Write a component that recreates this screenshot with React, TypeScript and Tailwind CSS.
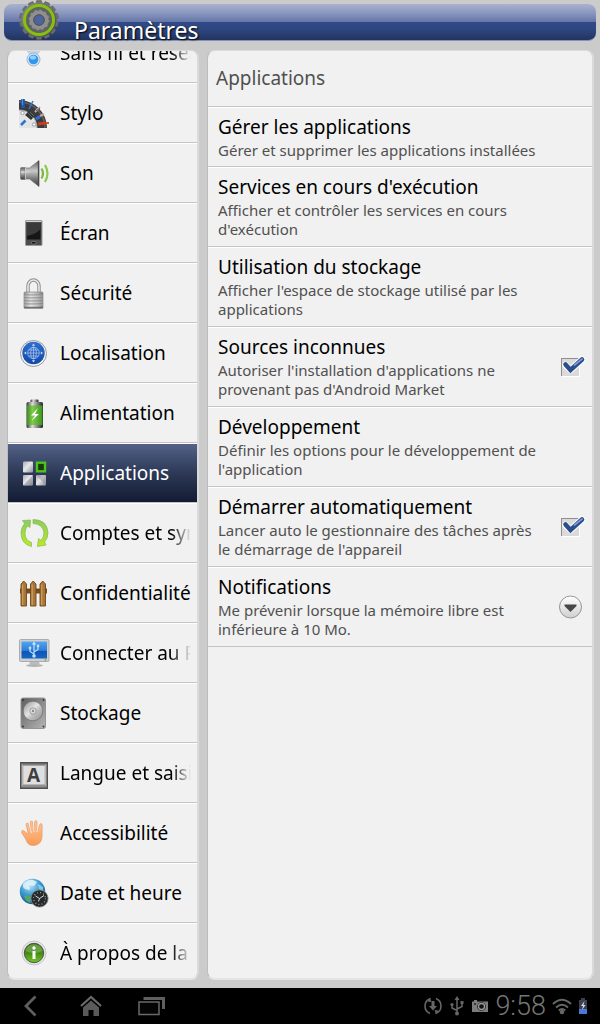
import React, { useState } from "react"

interface ICategory {
  id: string
  label: string
  icon: React.FC
  fade?: boolean
}

interface ISetting {
  id: string
  title: string
  summary: string
  compact?: boolean
  kind: "link" | "check" | "list"
}

const iconClass = "h-8 w-8 shrink-0"

const WirelessIcon: React.FC = () => (
  <svg viewBox="0 0 32 32" className={iconClass} aria-hidden="true">
    <path d="M6 8a14 14 0 0 1 20 0M9 13a9 9 0 0 1 14 0" fill="none" stroke="#a9c6e6" strokeWidth="2" />
    <path d="M7 12q8-4 17 0l-4 5h-9z" fill="#c3d4e6" />
    <circle cx="15.500" cy="22.500" r="6.500" fill="#d5e2ef" stroke="#9fb8d2" strokeWidth="1" />
    <circle cx="15.500" cy="22.500" r="4.800" fill="#2e97f2" />
    <ellipse cx="15" cy="20.500" rx="3" ry="2" fill="#8fd0ff" />
  </svg>
)

const PenIcon: React.FC = () => (
  <svg viewBox="0 0 32 32" className={iconClass} aria-hidden="true">
    <path d="M1 3A28 28 0 0 1 29 31H18A17 17 0 0 0 1 14z" fill="#3b3b3d" />
    <path d="M1 5A26 26 0 0 1 27 31" fill="none" stroke="#5f6062" strokeWidth="1.500" />
    <path d="M1 13A18 18 0 0 1 19 31H1z" fill="#e3e4e5" />
    <path d="M1 13A18 18 0 0 1 19 31" fill="none" stroke="#a5a7aa" strokeWidth="1" />
    <path d="M7 18l4-4 6 5-4 4z" fill="#303236" />
    <path d="M10 16l5 5M12 15l4 4" stroke="#777" strokeWidth="0.800" />
    <path d="M5 11V2" stroke="#1959b8" strokeWidth="3.500" />
    <path d="M4.500 8V2" stroke="#4d93e4" strokeWidth="1" />
    <path d="M11 12l4-8" stroke="#3b78c6" strokeWidth="1.600" />
    <path d="M17 15l5-5" stroke="#b9babd" strokeWidth="2" />
    <path d="M18 14l4-3" stroke="#69503e" strokeWidth="1" />
    <path d="M18 22l4-2.500" stroke="#2b72d6" strokeWidth="3" />
    <path d="M22 19l4-2" stroke="#c9a394" strokeWidth="2" />
    <path d="M20 27l8-1" stroke="#c93a1e" strokeWidth="3" />
    <path d="M28 26h3" stroke="#e0543a" strokeWidth="2" />
    <path d="M3 28l4.500-4.500" stroke="#2f73d0" strokeWidth="2.500" />
    <circle cx="4.500" cy="16" r="1.700" fill="#fff" stroke="#888" strokeWidth="0.800" />
    <circle cx="16" cy="27.500" r="1.700" fill="#fff" stroke="#888" strokeWidth="0.800" />
  </svg>
)

const SoundIcon: React.FC = () => (
  <svg viewBox="0 0 32 32" className={iconClass} aria-hidden="true">
    <defs>
      <linearGradient id="sound" x1="0" y1="0" x2="0" y2="1">
        <stop offset="0" stopColor="#5b5b5b" />
        <stop offset="0.400" stopColor="#c9c9c9" />
        <stop offset="0.700" stopColor="#7a7a7a" />
        <stop offset="1" stopColor="#3d3d3d" />
      </linearGradient>
    </defs>
    <rect x="2.500" y="10.500" width="5" height="12" rx="1" fill="url(#sound)" stroke="#777" strokeWidth="0.700" />
    <path d="M7 11h4.500L21 3.500v26L11.500 22H7z" fill="url(#sound)" stroke="#777" strokeWidth="0.700" />
    <path d="M2.500 15h9M7.500 11v11" stroke="#eee" strokeWidth="0.800" opacity="0.700" />
    <path d="M20.500 4v25" stroke="#4a4a4a" strokeWidth="1.200" />
    <path d="M23.500 11.500q3 5 0 10" fill="none" stroke="#7cb93e" strokeWidth="2.200" />
    <path d="M27 8q5 8.500 0 17" fill="none" stroke="#8cc751" strokeWidth="2.200" />
  </svg>
)

const ScreenIcon: React.FC = () => (
  <svg viewBox="0 0 32 32" className={iconClass} aria-hidden="true">
    <rect x="7.500" y="3.500" width="16.500" height="25" rx="0.800" fill="#4c4c4c" stroke="#9b9b9b" strokeWidth="1" />
    <rect x="9" y="6" width="13.500" height="16.500" fill="#151515" />
    <path d="M9 6h13.500v6Q19 17 9 19z" fill="#3a3a3a" />
    <path d="M8 4.500h15.500" stroke="#cfcfcf" strokeWidth="1" />
    <rect x="13.500" y="24.500" width="4.500" height="2.500" rx="1" fill="#161616" stroke="#8a8a8a" strokeWidth="0.700" />
  </svg>
)

const LockIcon: React.FC = () => (
  <svg viewBox="0 0 32 32" className={iconClass} aria-hidden="true">
    <defs>
      <linearGradient id="lock" x1="0" y1="0" x2="1" y2="0">
        <stop offset="0" stopColor="#8e8e8e" />
        <stop offset="0.350" stopColor="#dcdcdc" />
        <stop offset="0.700" stopColor="#b5b5b5" />
        <stop offset="1" stopColor="#7d7d7d" />
      </linearGradient>
    </defs>
    <path d="M10 16V9a5.500 6 0 0 1 11 0v7" fill="none" stroke="#8d8d8d" strokeWidth="3.400" />
    <path d="M10 16V9a5.500 6 0 0 1 11 0v7" fill="none" stroke="#e6e6e6" strokeWidth="1.600" />
    <rect x="6" y="15" width="19" height="16.500" rx="1" fill="url(#lock)" stroke="#8a8a8a" strokeWidth="0.700" />
    <path d="M6 18h19M6 21h19M6 24h19M6 27h19" stroke="#878787" strokeWidth="0.900" />
    <path d="M6 19h19M6 22h19M6 25h19M6 28h19" stroke="#ededed" strokeWidth="0.400" />
    <path d="M6 30.500h19" stroke="#6e6e6e" strokeWidth="1.200" />
  </svg>
)

const LocationIcon: React.FC = () => (
  <svg viewBox="0 0 32 32" className={iconClass} aria-hidden="true">
    <defs>
      <linearGradient id="location" x1="0" y1="0" x2="0" y2="1">
        <stop offset="0" stopColor="#2f6fd0" />
        <stop offset="1" stopColor="#1149a8" />
      </linearGradient>
    </defs>
    <circle cx="15.500" cy="16.500" r="13" fill="#f4f4f4" stroke="#8d8f94" strokeWidth="0.900" />
    <circle cx="15.500" cy="16" r="11.200" fill="url(#location)" />
    <g fill="none" stroke="#b5cff5" strokeWidth="0.700">
      <circle cx="15.500" cy="16" r="5.800" />
      <ellipse cx="15.500" cy="16" rx="2.800" ry="5.800" />
      <path d="M9.700 16h11.600M10.700 13h9.600M10.700 19h9.600M15.500 10v12" />
    </g>
    <path d="M15.500 6.500l1.600 2.200h-3.200zM15.500 25.500l1.600-2.200h-3.200zM6 16l2.200-1.600v3.200zM25 16l-2.200-1.600v3.200z" fill="#cfe0fa" />
  </svg>
)

const BatteryIcon: React.FC = () => (
  <svg viewBox="0 0 32 32" className={iconClass} aria-hidden="true">
    <defs>
      <linearGradient id="battery" x1="0" y1="0" x2="1" y2="0">
        <stop offset="0" stopColor="#3f8f22" />
        <stop offset="0.350" stopColor="#7fcb4a" />
        <stop offset="1" stopColor="#3d951f" />
      </linearGradient>
      <linearGradient id="batteryCap" x1="0" y1="0" x2="1" y2="0">
        <stop offset="0" stopColor="#333" />
        <stop offset="0.350" stopColor="#ddd" />
        <stop offset="1" stopColor="#222" />
      </linearGradient>
    </defs>
    <rect x="12.500" y="2.500" width="8" height="4" rx="1" fill="url(#batteryCap)" />
    <rect x="8.500" y="5" width="16.500" height="26" rx="1.500" fill="url(#batteryCap)" />
    <rect x="9" y="8.500" width="15.500" height="19.500" fill="url(#battery)" />
    <path d="M20 11l-7 7.500h4L13.500 24l7.500-7h-4z" fill="#fff" />
  </svg>
)

const AppsIcon: React.FC = () => (
  <svg viewBox="0 0 32 32" className={iconClass} aria-hidden="true">
    <defs>
      <linearGradient id="apps" x1="0" y1="0" x2="1" y2="1">
        <stop offset="0" stopColor="#a9acb2" />
        <stop offset="0.450" stopColor="#e6e7ea" />
        <stop offset="1" stopColor="#8e9198" />
      </linearGradient>
    </defs>
    <rect x="5" y="4.500" width="10" height="11" rx="1" fill="url(#apps)" />
    <rect x="5" y="18" width="10" height="10.500" rx="1" fill="url(#apps)" />
    <rect x="18" y="18" width="10" height="10.500" rx="1" fill="url(#apps)" />
    <path d="M5 28.500L15 18v10.500zM18 18l10 10.500V18z" fill="#6f737c" opacity="0.350" />
    <rect x="19" y="5.700" width="8" height="8.600" fill="#173a0c" stroke="#4cc41c" strokeWidth="2.400" />
  </svg>
)

const SyncIcon: React.FC = () => (
  <svg viewBox="0 0 32 32" className={iconClass} aria-hidden="true">
    <defs>
      <linearGradient id="sync" x1="0" y1="0" x2="0" y2="1">
        <stop offset="0" stopColor="#8ccb62" />
        <stop offset="1" stopColor="#b9ec1c" />
      </linearGradient>
    </defs>
    <path
      d="M13.500 29.500Q3 27 3 16q0-5 3.500-9.500L4.500 3.500 12.500 3 12 10.500 9.500 9Q7 12 7 16q0 7.500 6.500 9.500z"
      fill="url(#sync)"
      stroke="#87b85c"
      strokeWidth="0.700"
    />
    <path
      d="M15 2.500q14 0 15 13 0 6-3.500 9.500l1.500 3-8.500 1.500 1-8 2.500 2Q26 20 26 16 25 7 15 6.500z"
      fill="url(#sync)"
      stroke="#87b85c"
      strokeWidth="0.700"
    />
  </svg>
)

const FenceIcon: React.FC = () => (
  <svg viewBox="0 0 32 32" className={iconClass} aria-hidden="true">
    <path d="M2 12h27v4.500H2z" fill="#7c4e1d" />
    <path d="M2 12h27" stroke="#5d3812" strokeWidth="0.800" />
    {[3, 12.500, 22].map((x) => (
      <g key={x}>
        <path d={`M${x} 29V7l2.700-3 2.800 3v22z`} fill="#a8763a" stroke="#6d4517" strokeWidth="0.900" />
        <path d={`M${x + 1.700} 28V7.500`} stroke="#cf9f58" strokeWidth="1.200" />
      </g>
    ))}
  </svg>
)

const MonitorIcon: React.FC = () => (
  <svg viewBox="0 0 32 32" className={iconClass} aria-hidden="true">
    <defs>
      <linearGradient id="monitor" x1="0" y1="0" x2="0" y2="1">
        <stop offset="0" stopColor="#53a5ec" />
        <stop offset="0.550" stopColor="#2a7bd6" />
        <stop offset="0.560" stopColor="#0b55b6" />
        <stop offset="1" stopColor="#1766c4" />
      </linearGradient>
    </defs>
    <rect x="1.500" y="2.500" width="29.500" height="22" rx="1.200" fill="#cdcfd1" stroke="#9c9fa2" strokeWidth="0.800" />
    <rect x="3.500" y="4.500" width="25.500" height="17" fill="url(#monitor)" />
    <path d="M12 25h9l1 2.500h-11z" fill="#b9bbbd" />
    <ellipse cx="16.500" cy="28.500" rx="8.500" ry="1.500" fill="#b1b3b5" />
    <path d="M16 20V6.500M16 17l-4-2.500v-3M16 15l4-2.500v-3" fill="none" stroke="#c0def9" strokeWidth="1.200" />
    <path d="M16 4.500l2 3h-4z" fill="#d7ecff" />
    <circle cx="12" cy="11" r="1.400" fill="#c0def9" />
    <circle cx="20" cy="9" r="1.400" fill="#c0def9" />
    <circle cx="16" cy="19" r="1.800" fill="#c0def9" />
    <circle cx="27.500" cy="23" r="0.900" fill="#7bbf2a" />
  </svg>
)

const DiskIcon: React.FC = () => (
  <svg viewBox="0 0 32 32" className={iconClass} aria-hidden="true">
    <defs>
      <linearGradient id="disk" x1="0" y1="0" x2="1" y2="1">
        <stop offset="0" stopColor="#5d5d5d" />
        <stop offset="1" stopColor="#b6b6b6" />
      </linearGradient>
      <linearGradient id="platter" x1="0" y1="0" x2="1" y2="1">
        <stop offset="0" stopColor="#8f8f8f" />
        <stop offset="0.450" stopColor="#e4e4e4" />
        <stop offset="0.600" stopColor="#c0c0c0" />
        <stop offset="1" stopColor="#8c8c8c" />
      </linearGradient>
    </defs>
    <rect x="3" y="1" width="24.500" height="30.500" rx="2" fill="url(#disk)" stroke="#8f8f8f" strokeWidth="0.900" />
    <circle cx="15" cy="14" r="9.800" fill="url(#platter)" stroke="#707070" strokeWidth="0.700" />
    <circle cx="15" cy="14" r="3.200" fill="#dedede" stroke="#8a8a8a" strokeWidth="0.800" />
    <circle cx="15" cy="14" r="1.200" fill="#8a8a8a" />
    {[5, 25.500].map((x) => (
      <React.Fragment key={x}>
        <circle cx={x} cy="3" r="0.900" fill="#333" />
        <circle cx={x} cy="29.500" r="0.900" fill="#333" />
      </React.Fragment>
    ))}
  </svg>
)

const LanguageIcon: React.FC = () => (
  <svg viewBox="0 0 32 32" className={iconClass} aria-hidden="true">
    <rect x="2" y="5" width="28" height="27" fill="#505050" />
    <path d="M3.500 6.500h25l-2 2h-21z" fill="#7e7e7e" />
    <path d="M3.500 30.500h25l-3-4h-19z" fill="#8e8e8e" />
    <path d="M3.500 6.500l3 3v17l-3 4zM28.500 6.500l-3 3v17l3 4z" fill="#b5b5b5" />
    <rect x="5.500" y="8.500" width="21" height="19" fill="#dfdfdf" />
    <text
      x="15.500"
      y="25"
      textAnchor="middle"
      fontFamily="Open Sans, Noto Sans, sans-serif"
      fontWeight="700"
      fontSize="19"
      fill="#3f3f3f"
    >
      A
    </text>
  </svg>
)

const HandIcon: React.FC = () => (
  <svg viewBox="0 0 32 32" className={iconClass} aria-hidden="true">
    <defs>
      <linearGradient id="hand" x1="0" y1="0" x2="0" y2="1">
        <stop offset="0" stopColor="#ffc79a" />
        <stop offset="1" stopColor="#fb9a55" />
      </linearGradient>
    </defs>
    <path
      d="M9.500 26Q8 22 3.500 15.500q0-2.500 2-2l5 4L8 7.500q.2-1.800 2-1.200L13 14l-.7-9.200q.8-1.600 2.200-.2L16 13.500l.8-9.300q1-1.400 2.100 0L19.500 14l2.600-7q1.200-1 2 .5L24 20q-.8 8-8.500 8.500-4.500 0-6-2.500z"
      fill="url(#hand)"
      stroke="#e09a68"
      strokeWidth="0.700"
    />
    <path d="M11.200 7l2.300 9M15.400 5l.6 10M20.500 6l-1.500 9" fill="none" stroke="#f7eee6" strokeWidth="0.900" />
  </svg>
)

const DateIcon: React.FC = () => (
  <svg viewBox="0 0 32 32" className={iconClass} aria-hidden="true">
    <defs>
      <radialGradient id="globe" cx="0.400" cy="0.250" r="0.850">
        <stop offset="0" stopColor="#bfe6f8" />
        <stop offset="0.450" stopColor="#3c9dd3" />
        <stop offset="1" stopColor="#0b4a85" />
      </radialGradient>
    </defs>
    <circle cx="14.500" cy="14.500" r="12.700" fill="url(#globe)" />
    <path d="M5 7q4-5 10-4l4 2-3 4-5-1 1 5-5-1-2-2z" fill="#e4f4fa" opacity="0.850" />
    <path d="M6 19q4-2 7 1 1 3-1 6-5-2-6-7z" fill="#53a56c" />
    <path d="M20 7l5 3v4l-4-2z" fill="#9bd4ea" opacity="0.800" />
    <circle cx="21.500" cy="21.500" r="8.600" fill="#272a2b" stroke="#86898a" strokeWidth="0.800" />
    <circle cx="21.500" cy="21.500" r="6" fill="none" stroke="#c3c3c3" strokeWidth="1.200" strokeDasharray="0.800 2.340" />
    <path d="M17.500 19l4 2.500 4.500-3M21.500 21.500l-1 3" fill="none" stroke="#d9d9d9" strokeWidth="1" />
  </svg>
)

const InfoIcon: React.FC = () => (
  <svg viewBox="0 0 32 32" className={iconClass} aria-hidden="true">
    <defs>
      <linearGradient id="info" x1="0" y1="0" x2="0" y2="1">
        <stop offset="0" stopColor="#3f7d12" />
        <stop offset="0.500" stopColor="#438b10" />
        <stop offset="1" stopColor="#74c62a" />
      </linearGradient>
    </defs>
    <circle cx="16" cy="16" r="12" fill="#e6e6e6" stroke="#bdbdbd" strokeWidth="0.800" />
    <circle cx="16" cy="16" r="9.700" fill="url(#info)" stroke="#4c5547" strokeWidth="1" />
    <path d="M7.500 14a8.700 8.700 0 0 1 17 0q-8 4-17 0z" fill="#fff" opacity="0.220" />
    <circle cx="16" cy="11" r="1.700" fill="#fff" />
    <rect x="14.500" y="14" width="3" height="8" fill="#fff" />
  </svg>
)

const teeth = Array.from({ length: 14 }, (_, index) => (index * 360) / 14)

const GearIcon: React.FC = () => (
  <svg viewBox="0 0 42 42" className="-mb-px h-[42px] w-[42px] shrink-0" aria-hidden="true">
    <defs>
      <linearGradient id="gear" x1="0" y1="0" x2="1" y2="1">
        <stop offset="0" stopColor="#8c8c8a" />
        <stop offset="1" stopColor="#4a4a49" />
      </linearGradient>
    </defs>
    {teeth.map((angle) => (
      <path
        key={angle}
        d="M17.500 6l1.200-4.500h4.600L24.500 6z"
        fill="#6f6f6d"
        stroke="#5b5b59"
        strokeWidth="0.500"
        transform={`rotate(${angle} 21 21)`}
      />
    ))}
    <circle cx="21" cy="21" r="17.500" fill="url(#gear)" />
    <circle cx="21" cy="21" r="14.500" fill="#5e6260" stroke="#84c20f" strokeWidth="3" />
    <circle cx="21" cy="21" r="7.600" fill="none" stroke="#8f8f8f" strokeWidth="4" />
    <circle cx="21" cy="21" r="9.800" fill="none" stroke="#8f8f8f" strokeWidth="1.200" strokeDasharray="2.560 2.570" />
    <circle cx="21" cy="21" r="5.300" fill="#4c639b" stroke="#4d4d4d" strokeWidth="0.900" />
  </svg>
)

const categories: ICategory[] = [
  { id: "wireless", label: "Sans fil et réseau", icon: WirelessIcon, fade: true },
  { id: "pen", label: "Stylo", icon: PenIcon },
  { id: "sound", label: "Son", icon: SoundIcon },
  { id: "screen", label: "Écran", icon: ScreenIcon },
  { id: "security", label: "Sécurité", icon: LockIcon },
  { id: "location", label: "Localisation", icon: LocationIcon },
  { id: "power", label: "Alimentation", icon: BatteryIcon },
  { id: "apps", label: "Applications", icon: AppsIcon },
  { id: "accounts", label: "Comptes et synchro", icon: SyncIcon, fade: true },
  { id: "privacy", label: "Confidentialité", icon: FenceIcon },
  { id: "connect", label: "Connecter au PC", icon: MonitorIcon, fade: true },
  { id: "storage", label: "Stockage", icon: DiskIcon },
  { id: "language", label: "Langue et saisie", icon: LanguageIcon, fade: true },
  { id: "accessibility", label: "Accessibilité", icon: HandIcon },
  { id: "date", label: "Date et heure", icon: DateIcon },
  { id: "about", label: "À propos de la tablette", icon: InfoIcon, fade: true },
]

const settings: ISetting[] = [
  {
    id: "manage",
    title: "Gérer les applications",
    summary: "Gérer et supprimer les applications installées",
    compact: true,
    kind: "link",
  },
  {
    id: "services",
    title: "Services en cours d'exécution",
    summary: "Afficher et contrôler les services en cours d'exécution",
    kind: "link",
  },
  {
    id: "usage",
    title: "Utilisation du stockage",
    summary: "Afficher l'espace de stockage utilisé par les applications",
    kind: "link",
  },
  {
    id: "unknown",
    title: "Sources inconnues",
    summary: "Autoriser l'installation d'applications ne provenant pas d'Android Market",
    kind: "check",
  },
  {
    id: "development",
    title: "Développement",
    summary: "Définir les options pour le développement de l'application",
    kind: "link",
  },
  {
    id: "autostart",
    title: "Démarrer automatiquement",
    summary: "Lancer auto le gestionnaire des tâches après le démarrage de l'appareil",
    kind: "check",
  },
  {
    id: "notifications",
    title: "Notifications",
    summary: "Me prévenir lorsque la mémoire libre est inférieure à 10 Mo.",
    kind: "list",
  },
]

const panelClass =
  "overflow-hidden rounded-lg border-t border-r-2 border-b-2 border-l border-t-[#dcdcdc] border-r-[#dadada] border-b-[#e4e4e4] border-l-[#bdbdbd] bg-[#f1f1f1]"

const Categories: React.FC = () => {
  const [current, setCurrent] = useState<string>("apps")

  const rowClass = (b: boolean) =>
    `flex h-15 w-full items-center gap-2.5 border-t border-b border-t-white border-b-[#c4c4c4] pr-1.5 pl-2.5 text-left ${
      b ? "bg-linear-to-b from-[#536287] via-[#2d3957] to-[#131c33] text-white" : "text-black"
    }`
  const labelClass = (b: boolean) =>
    `flex-1 overflow-hidden text-[19px] leading-7 whitespace-nowrap ${
      b ? "mask-r-from-85% mask-r-to-100%" : ""
    }`

  return (
    <nav className={`w-48 shrink-0 ${panelClass}`}>
      {/* the list is scrolled down by part of a row */}
      <ul className="-mt-7">
        {categories.map(({ id, label, icon: Icon, fade }) => (
          <li key={id}>
            <button type="button" className={rowClass(id === current)} onClick={() => setCurrent(id)}>
              <Icon />
              <span className={labelClass(Boolean(fade))}>{label}</span>
            </button>
          </li>
        ))}
      </ul>
    </nav>
  )
}

const SettingText: React.FC<{ setting: ISetting }> = ({ setting }) => (
  <span className="flex-1">
    <span className="block text-[19px] leading-6 text-black">{setting.title}</span>
    <span className="mt-0.5 block text-[15px] leading-[19px] text-[#505050]">{setting.summary}</span>
  </span>
)

const SettingRow: React.FC<{ setting: ISetting }> = ({ setting }) => {
  const [checked, setChecked] = useState<boolean>(true)
  const className = `flex w-full items-center gap-3 border-t border-b border-t-white border-b-[#c4c4c4] py-1.5 pr-1 pl-2.5 text-left ${
    setting.compact ? "min-h-15" : "min-h-20"
  }`

  if (setting.kind === "check") {
    return (
      <label className={className}>
        <SettingText setting={setting} />
        <span className="relative flex w-9 justify-center">
          <input
            type="checkbox"
            checked={checked}
            onChange={(event) => setChecked(event.target.checked)}
            className="h-[18px] w-[18px] appearance-none border-t border-l border-[#8f8f8f] bg-[#dadada] shadow-[1px_1px_0_#fff]"
          />
          {checked && (
            <svg viewBox="0 0 24 20" className="pointer-events-none absolute -top-0.5 left-2.5 h-5 w-6" aria-hidden="true">
              <path
                d="M3.500 9l5 5L20 3.500"
                fill="none"
                stroke="#fff"
                strokeWidth="6.500"
                strokeLinecap="round"
                strokeLinejoin="round"
              />
              <path d="M3.500 8.500l5 5.500L20 3.500" fill="none" stroke="#2b4d8c" strokeWidth="4.600" strokeLinecap="round" />
              <path d="M12.500 9l7.500-6" fill="none" stroke="#7c98cf" strokeWidth="1.800" strokeLinecap="round" />
            </svg>
          )}
        </span>
      </label>
    )
  }

  return (
    <button type="button" className={className}>
      <SettingText setting={setting} />
      <span className="flex w-9 justify-center">
        {setting.kind === "list" && (
          <svg viewBox="0 0 24 24" className="h-6 w-6" aria-hidden="true">
            <defs>
              <linearGradient id="expander" x1="0" y1="0" x2="0" y2="1">
                <stop offset="0" stopColor="#fff" />
                <stop offset="1" stopColor="#cfcfcf" />
              </linearGradient>
            </defs>
            <circle cx="12.500" cy="12" r="11" fill="url(#expander)" stroke="#959595" strokeWidth="1" />
            <path d="M6.500 9.500h12v1.500L12.500 17l-6-6z" fill="#474747" />
          </svg>
        )}
      </span>
    </button>
  )
}

const navButtons = [
  {
    label: "Retour",
    icon: (
      <svg viewBox="0 0 28 24" className="h-6 w-7" aria-hidden="true">
        <path d="M18.500 2.500L9 12l9.500 9.500" fill="none" stroke="#5f5f5f" strokeWidth="2.800" />
      </svg>
    ),
  },
  {
    label: "Accueil",
    icon: (
      <svg viewBox="0 0 28 24" className="h-6 w-7" aria-hidden="true">
        <path d="M4 12L14 3l10 9" fill="none" stroke="#6a6a6a" strokeWidth="2.200" />
        <path d="M14 6.500l8 7V22h-5.500v-6h-5v6H6v-8.500z" fill="#5a5a5a" />
      </svg>
    ),
  },
  {
    label: "Applications récentes",
    icon: (
      <svg viewBox="0 0 28 24" className="h-6 w-7" aria-hidden="true">
        <path d="M6.500 4.500h20V15" fill="none" stroke="#5f5f5f" strokeWidth="3" />
        <rect x="2" y="8" width="20" height="12.500" fill="#050505" stroke="#6a6a6a" strokeWidth="1.500" />
      </svg>
    ),
  },
]

const SystemBar: React.FC = () => (
  <footer className="flex h-9 shrink-0 items-center justify-between bg-black pr-3 pl-px">
    <div className="flex">
      {navButtons.map(({ label, icon }) => (
        <button key={label} type="button" aria-label={label} className="flex w-15 justify-center">
          {icon}
        </button>
      ))}
    </div>
    <div className="flex items-center gap-1.5 text-[#666666]">
      <svg viewBox="0 0 20 20" className="h-5 w-5" aria-hidden="true">
        <path d="M7.500 2.500A8 8 0 0 0 7 17.500M12.500 17.500A8 8 0 0 0 13 2.500" fill="none" stroke="currentColor" strokeWidth="1.600" />
        <path d="M7 2l1.500 4-4-.5zM13 18l-1.500-4 4 .5z" fill="currentColor" />
        <path d="M8.500 5h3v5h2.500l-4 4.500L6 10h2.500z" fill="currentColor" />
      </svg>
      <svg viewBox="0 0 16 20" className="h-5 w-4" aria-hidden="true">
        <path d="M8 17V3M8 14.500L3 12V8.500M8 13l5-2.500V6.500" fill="none" stroke="currentColor" strokeWidth="1.500" />
        <path d="M8 0l2.500 4h-5z" fill="currentColor" />
        <circle cx="3" cy="8.500" r="1.600" fill="currentColor" />
        <rect x="11.500" y="5" width="3" height="3" fill="currentColor" />
        <circle cx="8" cy="17.500" r="2" fill="currentColor" />
      </svg>
      <svg viewBox="0 0 18 16" className="h-4 w-[18px]" aria-hidden="true">
        <path d="M1 3.500h2V2h3v1.500h11V14H1z" fill="#7c7c7c" />
        <circle cx="10.500" cy="8.500" r="4.300" fill="#111" />
        <circle cx="10.500" cy="8.500" r="3" fill="none" stroke="#9a9a9a" strokeWidth="1.300" />
        <path d="M3 6h2" stroke="#222" strokeWidth="1.500" />
      </svg>
      <span className="font-[Roboto,sans-serif] text-[27px] leading-8 font-light text-[#757575]">9:58</span>
      <svg viewBox="0 0 20 18" className="h-[18px] w-5" aria-hidden="true">
        <path
          d="M1 7Q10-1.500 19 7M4 10.500q6-5.500 12 0M6.800 13.500q3.200-3 6.400 0"
          fill="none"
          stroke="currentColor"
          strokeWidth="2"
        />
        <circle cx="10" cy="15" r="2.300" fill="currentColor" />
      </svg>
      <svg viewBox="0 0 10 18" className="h-[18px] w-2.5" aria-hidden="true">
        <path d="M3 1h4v2h2v14H1V3h2z" fill="#3b4150" />
        <path d="M1 12h8v5H1z" fill="#4a78d8" />
        <path d="M6.500 4L3 9h2l-1 4 3.500-5h-2z" fill="#d6dbe6" />
      </svg>
    </div>
  </footer>
)

const App: React.FC = () => (
  <div className="flex h-screen flex-col bg-[#cbcbcb] font-['Noto_Sans',sans-serif]">
    <header className="mx-1 mt-1 flex h-[37px] shrink-0 items-end gap-3.5 rounded-lg border-b border-[#8492b8] bg-[linear-gradient(#a9b3ce_0%,#8a97bf_25%,#6577a9_49%,#314a86_50%,#2e4781_70%,#22335f_100%)] pl-3.5">
      <GearIcon />
      <h1 className="text-[23px] leading-5 text-white [text-shadow:1px_1px_2px_#000]">Paramètres</h1>
    </header>
    <main className="mt-[9px] mb-2 flex min-h-0 flex-1 gap-2 pr-1.5 pl-[7px]">
      <Categories />
      <section className={`flex-1 ${panelClass}`}>
        <h2 className="flex h-14 items-center border-b border-[#c4c4c4] pl-2 text-[19px] text-[#505050]">Applications</h2>
        {settings.map((setting) => (
          <SettingRow key={setting.id} setting={setting} />
        ))}
      </section>
    </main>
    <SystemBar />
  </div>
)

export default App
